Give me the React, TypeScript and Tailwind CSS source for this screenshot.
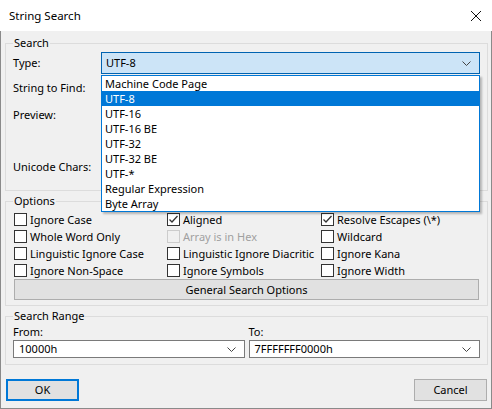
import React from "react";

const ENCODINGS = [
  "Machine Code Page",
  "UTF-8",
  "UTF-16",
  "UTF-16 BE",
  "UTF-32",
  "UTF-32 BE",
  "UTF-*",
  "Regular Expression",
  "Byte Array",
];

function Chevron() {
  return (
    <svg width="9" height="5" viewBox="0 0 9 5" className="shrink-0">
      <path d="M0.5 0.5 L4.5 4.5 L8.5 0.5" stroke="#444" strokeWidth="1" fill="none" />
    </svg>
  );
}

function Check({ label, checked, disabled }: { label: string; checked?: boolean; disabled?: boolean }) {
  return (
    <div className="flex h-[17px] items-center">
      <span
        className={`flex h-[13px] w-[13px] shrink-0 items-center justify-center border ${
          disabled ? "border-[#cccccc] bg-[#f0f0f0]" : "border-[#333333] bg-white"
        }`}
      >
        {checked && (
          <svg width="11" height="11" viewBox="0 0 11 11">
            <path d="M1.5 5.5 L4 8 L9.5 2" stroke="#333" strokeWidth="1.3" fill="none" />
          </svg>
        )}
      </span>
      <span className={`ml-[3px] whitespace-nowrap ${disabled ? "text-[#a0a0a0]" : "text-black"}`}>{label}</span>
    </div>
  );
}

function Combo({ value }: { value: string }) {
  return (
    <div className="flex h-[22px] flex-1 items-center justify-between border border-[#7a7a7a] bg-white pl-[5px] pr-[8px]">
      <span>{value}</span>
      <Chevron />
    </div>
  );
}

export default function App() {
  return (
    <div className="h-[409px] w-[492px] font-['Segoe_UI','Noto_Sans',sans-serif] text-[11px] leading-[16px] text-black">
      {/* Title bar */}
      <div className="flex h-[31px] items-center justify-between bg-white pl-[9px] pr-[10px]">
        <span className="text-[11.5px]">String Search</span>
        <svg width="12" height="12" viewBox="0 0 12 12">
          <path d="M1 1 L11 11 M11 1 L1 11" stroke="#111" strokeWidth="1" />
        </svg>
      </div>

      <div className="h-[378px] border-x border-b border-[#8a8a8a] bg-[#f0f0f0] pt-[4px]">
        {/* Search */}
        <fieldset className="ml-[4px] w-[483px] border border-[#dcdcdc] px-[7px] pb-[12px]">
          <legend className="px-[1px]">Search</legend>
          <div className="mt-[1px] flex h-[22px] items-center">
            <span className="w-[88px]">Type:</span>
            <div className="relative flex-1 self-stretch">
              <div className="flex h-[22px] items-center justify-between border border-[#0063b1] bg-[#cce4f7] pl-[4px] pr-[8px]">
                <span>UTF-8</span>
                <Chevron />
              </div>
              <ul className="absolute left-0 right-0 top-[23px] z-10 border border-[#0078d7] bg-white shadow-[2px_2px_2px_rgba(0,0,0,0.25)]">
                {ENCODINGS.map((e) => (
                  <li
                    key={e}
                    className={`h-[15px] pl-[3px] leading-[15px] ${e === "UTF-8" ? "bg-[#0078d7] text-white" : ""}`}
                  >
                    {e}
                  </li>
                ))}
              </ul>
            </div>
          </div>
          <div className="mt-[3px] flex h-[22px] items-center">
            <span>String to Find:</span>
          </div>
          <div className="mt-[5px] h-[50px] pt-[3px]">
            <span>Preview:</span>
          </div>
          <div className="mt-[2px] flex h-[22px] items-center">
            <span>Unicode Chars:</span>
          </div>
        </fieldset>

        {/* Options */}
        <fieldset className="ml-[4px] mt-[2px] w-[483px] border border-[#dcdcdc] px-[7px] pb-[5px] pt-[2px]">
          <legend className="px-[1px]">Options</legend>
          <div className="ml-[1px] grid grid-cols-[153px_154px_1fr]">
            <Check label="Ignore Case" />
            <Check label="Aligned" checked />
            <Check label="Resolve Escapes (\*)" checked />
            <Check label="Whole Word Only" />
            <Check label="Array is in Hex" disabled />
            <Check label="Wildcard" />
            <Check label="Linguistic Ignore Case" />
            <Check label="Linguistic Ignore Diacritic" />
            <Check label="Ignore Kana" />
            <Check label="Ignore Non-Space" />
            <Check label="Ignore Symbols" />
            <Check label="Ignore Width" />
          </div>
          <button className="ml-[1px] flex h-[21px] w-[465px] items-center justify-center border border-[#adadad] bg-[#e1e1e1]">
            General Search Options
          </button>
        </fieldset>

        {/* Search Range */}
        <fieldset className="ml-[4px] mt-[2px] w-[483px] border border-[#dcdcdc] px-[7px] pb-[6px]">
          <legend className="px-[1px]">Search Range</legend>
          <div className="flex gap-[4px]">
            <div className="flex flex-1 flex-col">
              <span>From:</span>
              <Combo value="10000h" />
            </div>
            <div className="flex flex-1 flex-col">
              <span>To:</span>
              <Combo value="7FFFFFFF0000h" />
            </div>
          </div>
        </fieldset>

        {/* Buttons */}
        <div className="mt-[14px] flex justify-between pl-[5px] pr-[4px]">
          <button className="flex h-[22px] w-[73px] items-center justify-center border-2 border-[#0078d7] bg-[#e1e1e1]">
            OK
          </button>
          <button className="flex h-[22px] w-[73px] items-center justify-center border border-[#adadad] bg-[#e1e1e1]">
            Cancel
          </button>
        </div>
      </div>
    </div>
  );
}
